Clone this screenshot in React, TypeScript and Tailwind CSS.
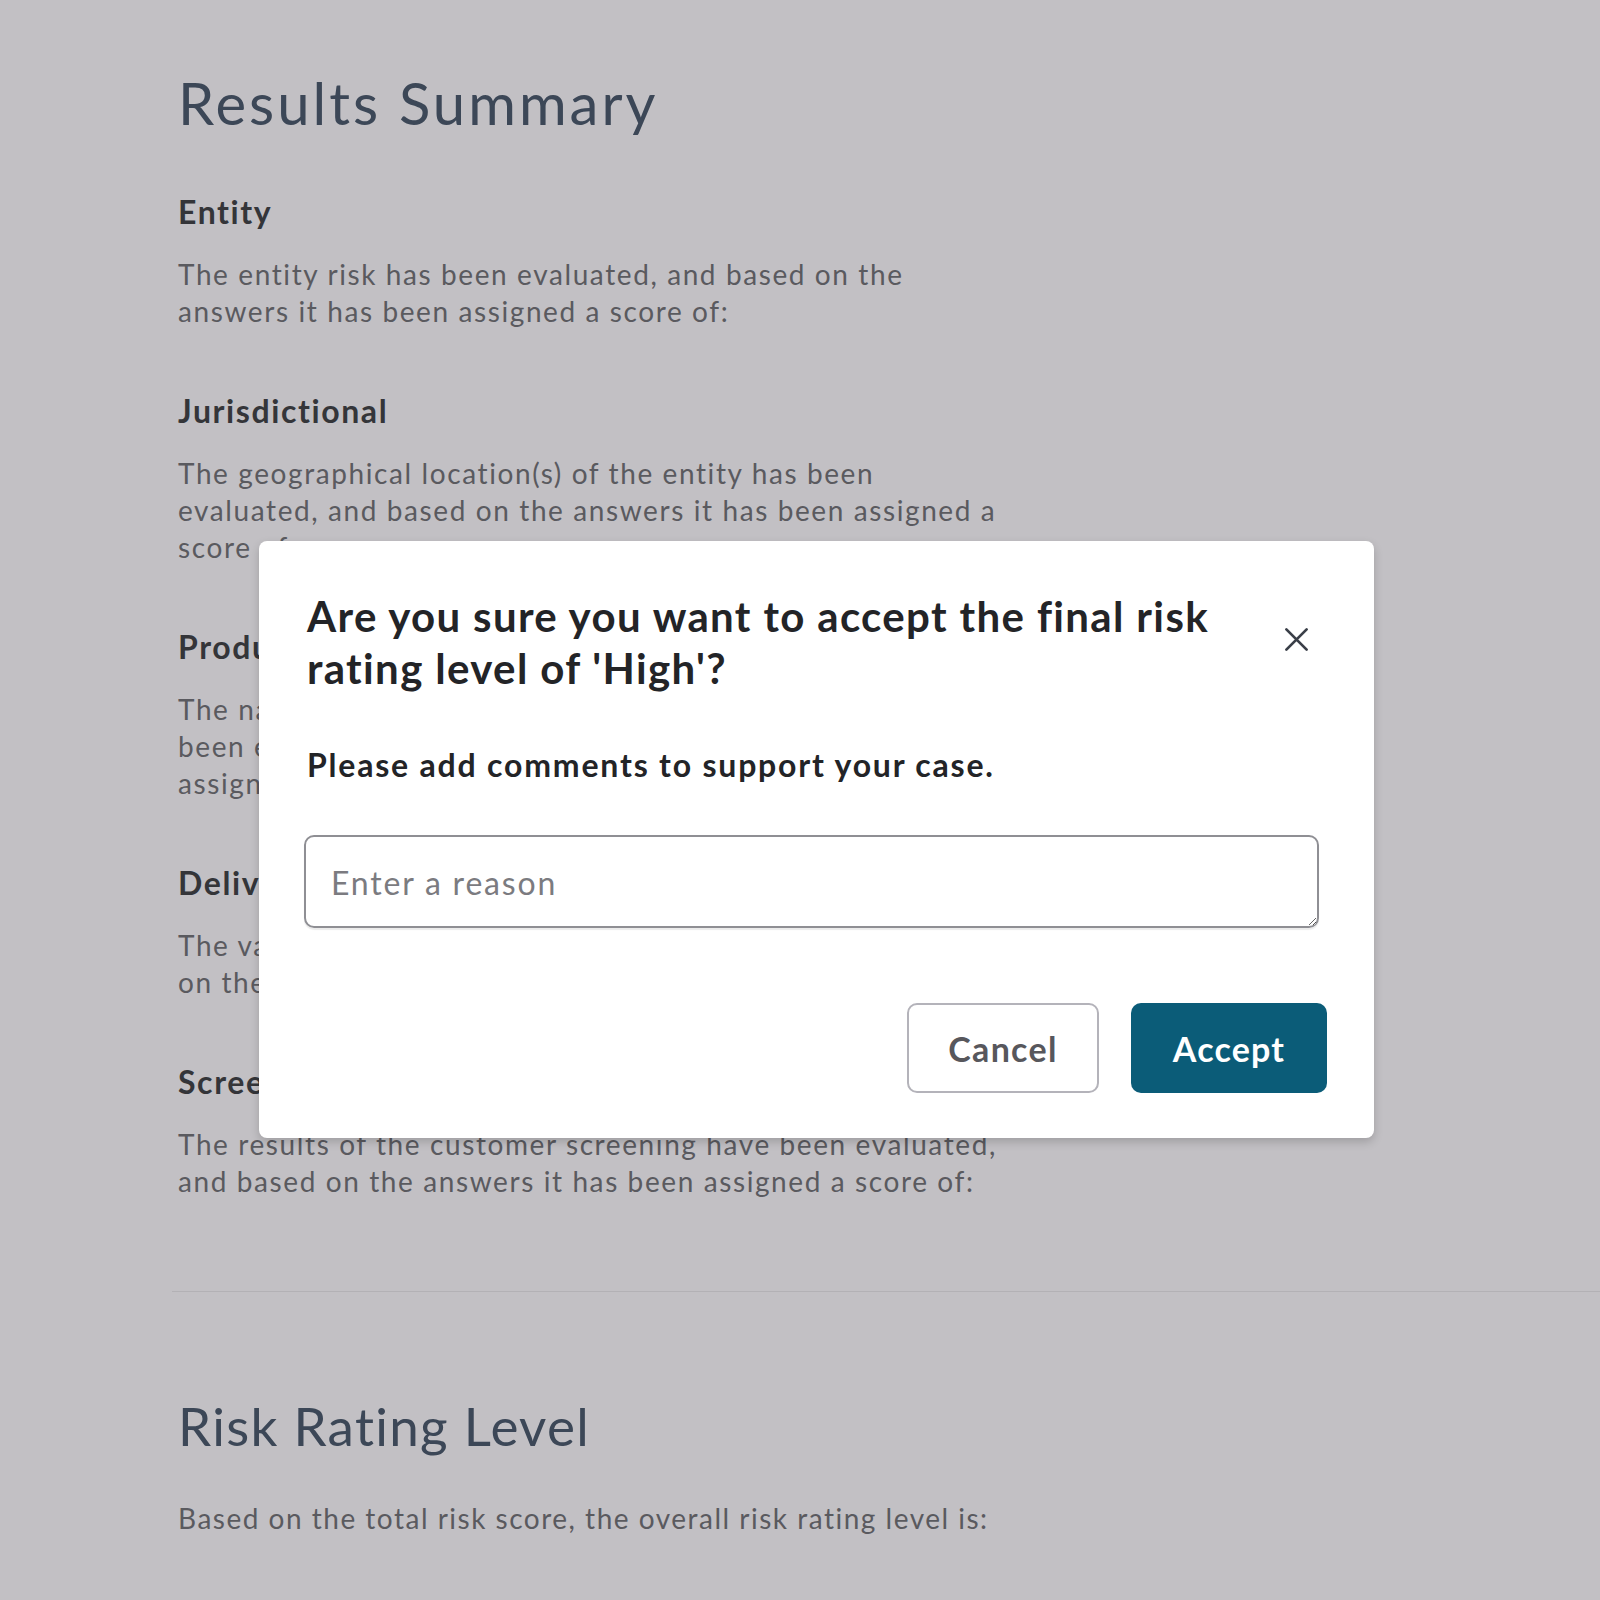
const sections = [
  {
    title: 'Entity',
    lines: ['The entity risk has been evaluated, and based on the', 'answers it has been assigned a score of:'],
  },
  {
    title: 'Jurisdictional',
    lines: [
      'The geographical location(s) of the entity has been',
      'evaluated, and based on the answers it has been assigned a',
      'score of:',
    ],
  },
  {
    title: 'Products and Services',
    lines: [
      'The nature of the products and services offered has',
      'been evaluated, and based on the answers it has been',
      'assigned a score of:',
    ],
  },
  {
    title: 'Delivery Channels',
    lines: ['The various delivery channels have been evaluated, and based', 'on the answers it has been assigned a score of:'],
  },
  {
    title: 'Screening',
    lines: ['The results of the customer screening have been evaluated,', 'and based on the answers it has been assigned a score of:'],
  },
]

const ConfirmModal = () => {
  return (
    <div className="absolute left-[259px] top-[541px] w-[1115px] rounded-lg bg-white pt-[49px] pl-[48px] pr-[47px] pb-[45px] shadow-[0_4px_10px_rgba(0,0,0,0.18)]">
      <div className="flex items-start justify-between">
        <h2 className="text-[42px] leading-[52px] font-bold text-[#232427] tracking-[1.35px]">
          Are you sure you want to accept the final risk
          <br />
          rating level of 'High'?
        </h2>
        <button className="mt-[36px] mr-[17px] h-[27px] w-[27px] text-[#3a3f48]">
          <svg viewBox="0 0 24 24" className="h-full w-full" fill="none" stroke="currentColor" strokeWidth="2.4" strokeLinecap="round">
            <path d="M3 3L21 21M21 3L3 21" />
          </svg>
        </button>
      </div>

      <p className="mt-[52px] text-[32px] leading-[38px] font-bold tracking-[1.8px] text-[#232427]">
        Please add comments to support your case.
      </p>

      <textarea
        className="-ml-[3px] mt-[51px] block h-[93px] w-[1015px] rounded-[10px] border-2 border-[#8f8f94] px-[25px] pt-[27px] text-[32px] leading-[38px] tracking-[1.8px] text-[#333] placeholder:text-[#7b7b80] outline-none shadow-[0_2px_1px_rgba(0,0,0,0.08)]"
        placeholder="Enter a reason"
      />

      <div className="mt-[75px] flex justify-end gap-[32px]">
        <button className="h-[90px] w-[192px] rounded-[10px] border-2 border-[#b4b3ba] bg-white text-[34px] font-bold tracking-[1.3px] text-[#57575c]">
          Cancel
        </button>
        <button className="h-[90px] w-[196px] rounded-[10px] bg-[#0b5c78] text-[34px] font-bold tracking-[1.2px] text-white">
          Accept
        </button>
      </div>
    </div>
  )
}

export default function App() {
  return (
    <div className="relative min-h-[1600px] overflow-hidden bg-[#c2c0c4] font-['Lato',sans-serif]">
      <div className="pl-[178px] pt-[68px] pb-[40px]">
        <h1 className="text-[58px] leading-[70px] tracking-[3px] text-[#3c4757]">Results Summary</h1>

        <div className="mt-[55px] flex flex-col gap-[62px]">
          {sections.map((s) => (
            <div key={s.title}>
              <h3 className="text-[32px] leading-[38px] font-bold tracking-[1.6px] text-[#343539]">{s.title}</h3>
              <p className="mt-[25px] text-[28px] leading-[37px] tracking-[1.6px] text-[#5a5a5f]">
                {s.lines.map((l, i) => (
                  <span key={i} className="block">
                    {l}
                  </span>
                ))}
              </p>
            </div>
          ))}
        </div>

        <div className="mt-[91px] -ml-[6px] border-t border-[#b3b1b5] shadow-[0_10px_0_-9px_#cbc9cd]" />

        <h1 className="mt-[102px] text-[53px] leading-[64px] tracking-[1.3px] text-[#3c4757]">Risk Rating Level</h1>
        <p className="mt-[42px] text-[28px] leading-[37px] tracking-[1.5px] text-[#5a5a5f]">
          Based on the total risk score, the overall risk rating level is:
        </p>
      </div>

      <ConfirmModal />
    </div>
  )
}
